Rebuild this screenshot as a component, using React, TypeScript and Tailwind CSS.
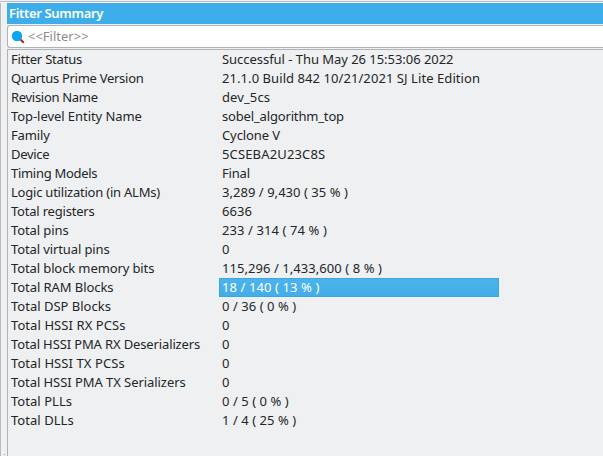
const rows: [string, string, string, string][] = [
  ["Fitter Status", "tracking-[-0.2px]", "Successful - Thu May 26 15:53:06 2022", "tracking-[-0.04px]"],
  ["Quartus Prime Version", "tracking-[-0.28px]", "21.1.0 Build 842 10/21/2021 SJ Lite Edition", "tracking-[0.07px]"],
  ["Revision Name", "tracking-[-0.3px]", "dev_5cs", "tracking-[0.1px]"],
  ["Top-level Entity Name", "tracking-[-0.06px]", "sobel_algorithm_top", "tracking-[-0.16px]"],
  ["Family", "tracking-[-0.15px]", "Cyclone V", "tracking-[-0.1px]"],
  ["Device", "tracking-[-0.3px]", "5CSEBA2U23C8S", "tracking-[0.15px]"],
  ["Timing Models", "tracking-[-0.3px]", "Final", "tracking-[-0.2px]"],
  ["Logic utilization (in ALMs)", "tracking-[-0.22px]", "3,289 / 9,430 ( 35 % )", "tracking-[0.04px]"],
  ["Total registers", "tracking-[-0.2px]", "6636", "tracking-[0.1px]"],
  ["Total pins", "tracking-[-0.1px]", "233 / 314 ( 74 % )", "tracking-[0.1px]"],
  ["Total virtual pins", "tracking-[-0.11px]", "0", "tracking-normal"],
  ["Total block memory bits", "tracking-[-0.11px]", "115,296 / 1,433,600 ( 8 % )", "tracking-[0.06px]"],
  ["Total RAM Blocks", "tracking-[-0.07px]", "18 / 140 ( 13 % )", "tracking-[0.1px]"],
  ["Total DSP Blocks", "tracking-normal", "0 / 36 ( 0 % )", "tracking-[0.05px]"],
  ["Total HSSI RX PCSs", "tracking-[0.08px]", "0", "tracking-normal"],
  ["Total HSSI PMA RX Deserializers", "tracking-[-0.13px]", "0", "tracking-normal"],
  ["Total HSSI TX PCSs", "tracking-[0.08px]", "0", "tracking-normal"],
  ["Total HSSI PMA TX Serializers", "tracking-[-0.06px]", "0", "tracking-normal"],
  ["Total PLLs", "tracking-[0.05px]", "0 / 5 ( 0 % )", "tracking-[0.05px]"],
  ["Total DLLs", "tracking-[0.05px]", "1 / 4 ( 25 % )", "tracking-[0.05px]"],
];

export default function App() {
  return (
    <div className="flex h-[456px] w-[603px] flex-col overflow-hidden bg-[#eff0f1] font-['Noto_Sans',sans-serif] text-[13px] text-[#232629]">
      <div className="mt-[1px] h-[1px] shrink-0 bg-[#bcbebf]" />
      <div className="h-[1px] shrink-0 bg-[#fafafa]" />
      <div className="flex min-h-0 flex-1">
        <div className="flex w-[7px] shrink-0 items-end border-l border-[#b9babb] pb-[1px] pl-[3px]">
          <div className="h-[1px] w-[1px] bg-[#a5a6a7]" />
        </div>
        <main className="flex min-w-0 flex-1 flex-col">
          <h1 className="h-[21px] shrink-0 bg-[#3daee9] pl-[2px] font-semibold leading-[21px] tracking-[-0.33px] text-white">Fitter Summary</h1>
          <div className="mt-[1px] flex h-[23px] shrink-0 items-center rounded-l-[3px] border border-r-0 border-[#b0b1b2] bg-white pl-[3px] text-[#8b8d8f]">
            <svg className="mr-[3px] h-[14px] w-[14px]" viewBox="0 0 14 14">
              <path d="M8.5 8.5l4.3 4.3" stroke="#b3211c" strokeWidth="2" />
              <circle cx="6" cy="6" r="5.2" fill="#0aa5f5" />
            </svg>
            <span className="pb-[1px] leading-[19px]">&lt;&lt;Filter&gt;&gt;</span>
          </div>
          <div className="mt-[1px] flex-1 border-l border-t border-[#b0b1b2]">
            {rows.map(([name, nameSpacing, value, valueSpacing]) => (
              <div key={name} className="flex h-[19px] whitespace-pre leading-[19px]">
                <span className={`w-[211px] pl-[3px] ${nameSpacing}`}>{name}</span>
                <span
                  className={`w-[280px] pl-[3px] ${valueSpacing} ${
                    name === "Total RAM Blocks"
                      ? "bg-linear-to-b from-[#4db4ec] to-[#41ade8] text-white shadow-[inset_0_0_0_1px_#3da6df]"
                      : ""
                  }`}
                >
                  {value}
                </span>
              </div>
            ))}
          </div>
        </main>
      </div>
    </div>
  );
}
